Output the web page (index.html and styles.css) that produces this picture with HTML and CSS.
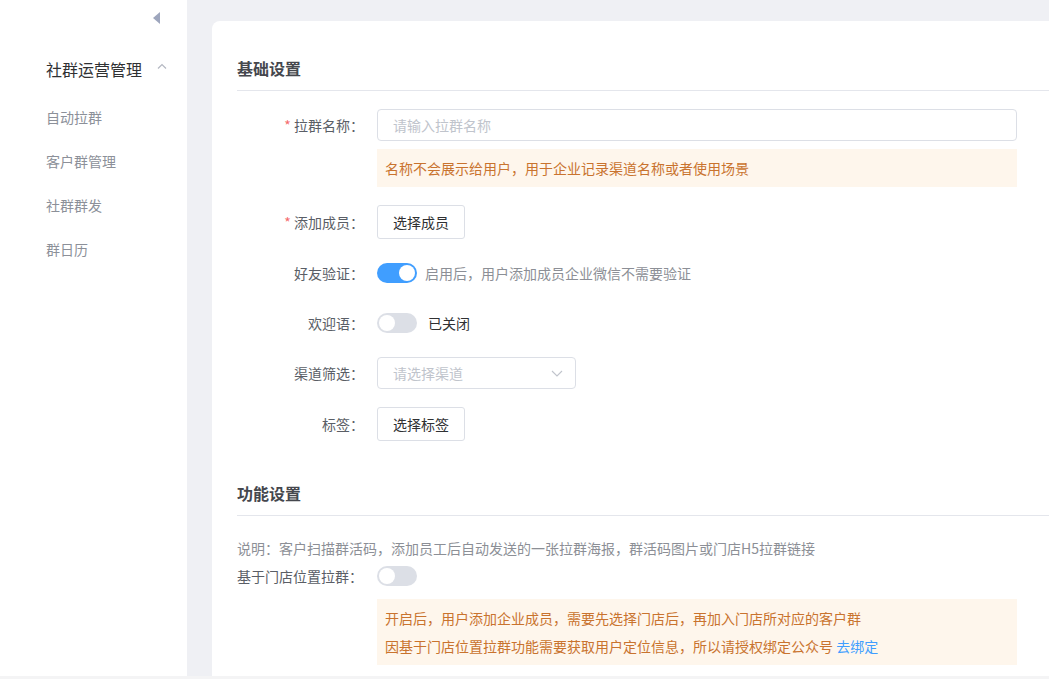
FILE: index.html
```html
<!DOCTYPE html>
<html lang="zh-CN">
<head>
<meta charset="utf-8">
<title>自动拉群</title>
<link rel="stylesheet" href="styles.css">
</head>
<body>
<div class="app">
  <aside class="sidebar">
    <div class="collapse-bar"><span class="collapse-tri"></span></div>
    <div class="menu-title">
      <span>社群运营管理</span>
      <svg class="chev-up" width="10" height="6" viewBox="0 0 10 6"><path d="M1 5.5 L5 1.5 L9 5.5" fill="none" stroke="#b4b8c2" stroke-width="1.2"/></svg>
    </div>
    <ul class="submenu">
      <li>自动拉群</li>
      <li>客户群管理</li>
      <li>社群群发</li>
      <li>群日历</li>
    </ul>
  </aside>
  <main class="main">
    <section class="card">
      <h2 class="section-title">基础设置</h2>
      <div class="form">
        <div class="form-item">
          <label class="label"><span class="req">*</span> 拉群名称：</label>
          <div class="control">
            <div class="input"><span class="placeholder">请输入拉群名称</span></div>
            <div class="notice">名称不会展示给用户，用于企业记录渠道名称或者使用场景</div>
          </div>
        </div>
        <div class="form-item">
          <label class="label tall"><span class="req">*</span> 添加成员：</label>
          <div class="control"><button class="btn">选择成员</button></div>
        </div>
        <div class="form-item">
          <label class="label">好友验证：</label>
          <div class="control row">
            <span class="switch on"><span class="knob"></span></span>
            <span class="switch-hint">启用后，用户添加成员企业微信不需要验证</span>
          </div>
        </div>
        <div class="form-item">
          <label class="label">欢迎语：</label>
          <div class="control row">
            <span class="switch"><span class="knob"></span></span>
            <span class="switch-state">已关闭</span>
          </div>
        </div>
        <div class="form-item">
          <label class="label">渠道筛选：</label>
          <div class="control">
            <div class="select">
              <span class="placeholder">请选择渠道</span>
              <svg width="12" height="7" viewBox="0 0 12 7"><path d="M1 1 L6 6 L11 1" fill="none" stroke="#c0c4cc" stroke-width="1.1"/></svg>
            </div>
          </div>
        </div>
        <div class="form-item">
          <label class="label tall">标签：</label>
          <div class="control"><button class="btn">选择标签</button></div>
        </div>
      </div>

      <h2 class="section-title second">功能设置</h2>
      <div class="form func">
        <p class="desc">说明：客户扫描群活码，添加员工后自动发送的一张拉群海报，群活码图片或门店H5拉群链接</p>
        <div class="form-item compact">
          <label class="label left">基于门店位置拉群：</label>
          <div class="control row">
            <span class="switch"><span class="knob"></span></span>
          </div>
        </div>
        <div class="form-item compact">
          <span class="label"></span>
          <div class="control">
            <div class="notice multi">
              <div>开启后，用户添加企业成员，需要先选择门店后，再加入门店所对应的客户群</div>
              <div>因基于门店位置拉群功能需要获取用户定位信息，所以请授权绑定公众号 <a class="link" href="#">去绑定</a></div>
            </div>
          </div>
        </div>
      </div>
    </section>
  </main>
</div>
</body>
</html>
```

FILE: styles.css
```css
* { box-sizing: border-box; }
html, body {
  margin: 0;
  padding: 0;
  width: 1049px;
  height: 679px;
  overflow: hidden;
  background: #f4f4f5;
  font-family: "Noto Sans CJK SC", "Microsoft YaHei", sans-serif;
  font-size: 14px;
  color: #606266;
}
.app {
  display: flex;
  height: 676px;
  overflow: hidden;
}
.sidebar {
  width: 187px;
  flex: none;
  background: #ffffff;
}
.collapse-bar {
  height: 36px;
  display: flex;
  align-items: center;
  justify-content: flex-end;
  padding-right: 27px;
}
.collapse-tri {
  width: 0;
  height: 0;
  border-top: 6px solid transparent;
  border-bottom: 6px solid transparent;
  border-right: 7px solid #9ea6bd;
}
.menu-title {
  margin-top: 11px;
  height: 44px;
  display: flex;
  align-items: center;
  padding-left: 46px;
  font-size: 16px;
  color: #303133;
}
.chev-up { margin-left: 15px; margin-top: -6px; }
.submenu {
  list-style: none;
  margin: 4px 0 0;
  padding: 0;
}
.submenu li {
  height: 44px;
  line-height: 44px;
  padding-left: 46px;
  font-size: 14px;
  color: #8c9099;
}
.main {
  flex: 1;
  background: #eff0f4;
  padding: 21px 0 0 25px;
  overflow: hidden;
}
.card {
  background: #ffffff;
  border-radius: 8px 0 0 0;
  height: 100%;
  padding: 35px 0 0 25px;
}
.section-title {
  margin: 0;
  font-size: 16px;
  line-height: 24px;
  font-weight: 600;
  color: #45474d;
  padding-bottom: 10px;
  border-bottom: 1px solid #e4e6ec;
}
.section-title.second { margin-top: 40px; }
.form {
  padding: 18px 32px 0 0;
  display: flex;
  flex-direction: column;
  gap: 18px;
}
.form.func { padding-top: 22px; gap: 0; }
.form-item {
  display: flex;
  align-items: flex-start;
}
.label {
  width: 140px;
  flex: none;
  padding-right: 13px;
  text-align: right;
  line-height: 32px;
  color: #5a5e66;
}
.label.tall { line-height: 34px; }
.label.left { text-align: left; line-height: 20px; }
.req { color: #f56c6c; }
.control { flex: 1; min-width: 0; }
.control.row {
  display: flex;
  align-items: center;
  height: 32px;
}
.compact .control.row { height: 20px; }
.input {
  height: 32px;
  border: 1px solid #dcdfe6;
  border-radius: 4px;
  padding: 0 15px;
  display: flex;
  align-items: center;
}
.placeholder { color: #c0c4cc; }
.notice {
  margin-top: 8px;
  background: #fef6ec;
  color: #c9732e;
  padding: 5px 8px;
  line-height: 28px;
}
.notice.multi { margin-top: 13px; }
.link { color: #409eff; text-decoration: none; }
.btn {
  height: 34px;
  padding: 0 15px;
  background: #ffffff;
  border: 1px solid #dcdfe6;
  border-radius: 3px;
  font-family: inherit;
  font-size: 14px;
  color: #303133;
}
.switch {
  position: relative;
  width: 40px;
  height: 20px;
  border-radius: 10px;
  background: #dcdfe6;
  flex: none;
}
.switch.on { background: #409eff; }
.knob {
  position: absolute;
  top: 2px;
  left: 2px;
  width: 16px;
  height: 16px;
  border-radius: 50%;
  background: #ffffff;
}
.switch.on .knob { left: 22px; }
.switch-hint { margin-left: 8px; color: #8c8f96; }
.switch-state { margin-left: 11px; color: #303133; }
.select {
  width: 199px;
  height: 32px;
  border: 1px solid #dcdfe6;
  border-radius: 4px;
  padding: 0 12px 0 15px;
  display: flex;
  align-items: center;
  justify-content: space-between;
}
.desc {
  margin: 0 0 8px;
  line-height: 20px;
  color: #8c8f96;
}
```
